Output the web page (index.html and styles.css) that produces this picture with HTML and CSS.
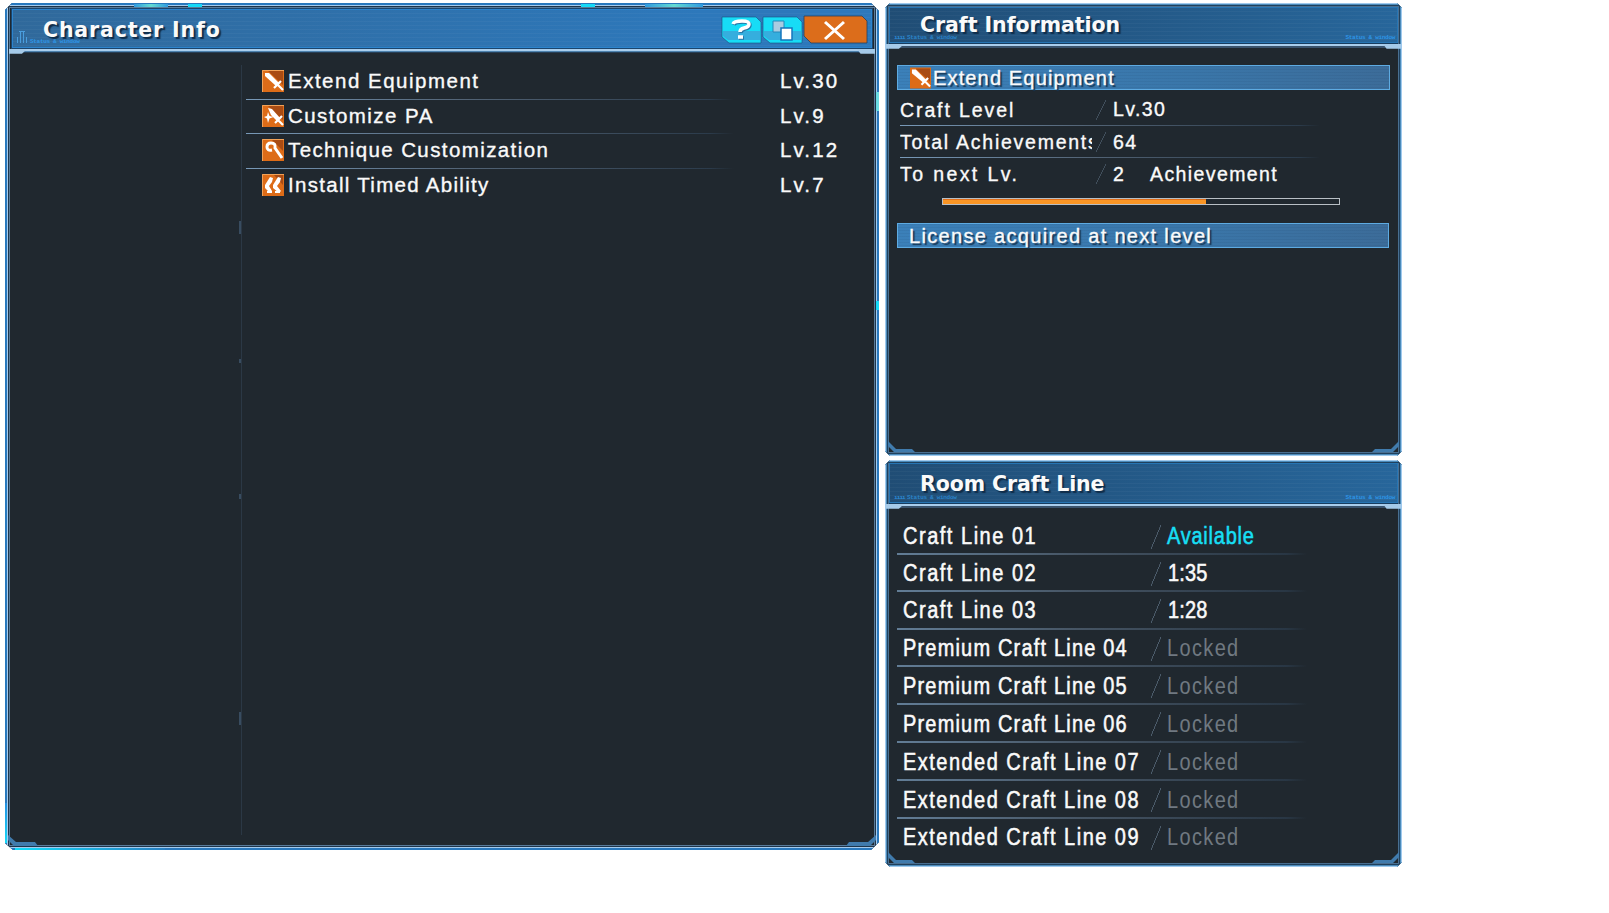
FILE: index.html
```html
<!DOCTYPE html>
<html lang="en">
<head>
<meta charset="utf-8">
<title>Character Info</title>
<link rel="stylesheet" href="styles.css">
</head>
<body>
<main class="desk">
  <section class="window window-main">
    <header class="head head-main">
      <svg class="bars" viewBox="0 0 11 12"><path d="M1.500 6v6M4.500 0v12M7.500 0v12M10.500 6v6M3 .5h6"/></svg>
      <span class="tiny">Status &amp; window</span>
      <h1 class="title title-main">Character Info</h1>
      <svg class="buttons" viewBox="0 0 145 26">
        <path class="cyan" d="M0 0h34l5 5v21H7l-7-6z"/><path class="shade" d="M1 14h37v9H6l-5-4z"/>
        <path class="q-shadow" d="M12 8q1-3 9-3 7 0 7 3 0 3-5 4-4 1-4 4M17 21h5"/>
        <path class="q" d="M11 7q1-3 9-3 7 0 7 3 0 3-5 4-4 1-4 4M16 20h5"/>
        <path class="cyan" d="M41 0h34l5 5v21H48l-7-6z"/><path class="shade" d="M42 14h37v9H47l-5-4z"/>
        <path class="pane-back" d="M51 4h11v11H51z"/><path class="pane-front" d="M59 11h11v12H59z"/>
        <path class="orange" d="M82 -1h58l5 5v22H89l-7-7z"/>
        <path class="x" d="M103 5l19 17M122 5l-19 17"/>
      </svg>
    </header>
    <div class="main-body">
      <aside class="side"><i></i><i></i><i></i><i></i></aside>
      <ul class="crafts">
        <li><svg class="icon" viewBox="0 0 22 22"><path class="tile" d="M0 0h22v22H0z"/><path class="dusk" d="M6 1h15v14z"/><path class="edge" d="M.5 22V.5H22"/><path class="fill" d="M3 3h4l10 10-3 3L3 6z"/><path class="ink" d="M12 18l7-7M15 14l6 6"/></svg><span class="name n1">Extend Equipment</span><b>Lv.30</b></li>
        <li><svg class="icon" viewBox="0 0 22 22"><path class="tile" d="M0 0h22v22H0z"/><path class="dusk" d="M6 1h15v14z"/><path class="edge" d="M.5 22V.5H22"/><path class="fill" d="M6 3l4 1 8 9-3 3-6-6zM6 7l1.500 4 4 1-4 1.500L6 18l-1-4.500L2 12l3-1z"/><path class="ink" d="M13 18l7-7M16 15l5 5"/></svg><span class="name n2">Customize PA</span><b>Lv.9</b></li>
        <li><svg class="icon" viewBox="0 0 22 22"><path class="tile" d="M0 0h22v22H0z"/><path class="dusk" d="M10 1h11v11z"/><path class="edge" d="M.5 22V.5H22"/><path class="ink wide" d="M10 11Q5 12 5 8q0-4 4-4 5 0 4 5l7 10"/></svg><span class="name n3">Technique Customization</span><b>Lv.12</b></li>
        <li><svg class="icon" viewBox="0 0 22 22"><path class="tile" d="M0 0h22v22H0z"/><path class="dusk" d="M12 1h9v10z"/><path class="edge" d="M.5 22V.5H22"/><path class="fill" d="M8 3l3 1-1 4-3 4 3 5-2 2-5-5v-3zM16 3l3 1-1 4-3 4 4 5-2 2-6-5v-3z"/><path class="ink" d="M5 18h5M13 18h5"/></svg><span class="name n4">Install Timed Ability</span><b>Lv.7</b></li>
      </ul>
    </div>
    <svg class="corner corner-l" viewBox="0 0 32 14"><path d="M0 0l8 7h19l3 4H6L0 5z"/></svg>
    <svg class="corner corner-r" viewBox="0 0 32 14"><path d="M0 0l8 7h19l3 4H6L0 5z"/></svg>
  </section>
  <div class="column">
    <section class="window window-info">
      <header class="head"><span class="dots">ıııı</span><span class="tiny">Status &amp; window</span><h2 class="title title-info">Craft Information</h2><span class="tiny tiny-end">Status &amp; window</span></header>
      <div class="info-body">
        <div class="banner banner-craft"><svg class="icon" viewBox="0 0 22 22"><path class="tile" d="M0 0h22v22H0z"/><path class="dusk" d="M6 1h15v14z"/><path class="fill" d="M2 2h4l11 11-3 3L2 6z"/><path class="ink" d="M12 18l7-7M15 14l6 6"/></svg><span class="banner-name">Extend Equipment</span></div>
        <dl class="stats">
          <div><dt class="loose">Craft Level</dt><i class="slash"></i><dd>Lv.30</dd></div>
          <div><dt>Total Achievements</dt><i class="slash"></i><dd>64</dd></div>
          <div><dt class="looser">To next Lv.</dt><i class="slash"></i><dd class="count">2</dd><dd class="unit">Achievement</dd></div>
        </dl>
        <div class="meter"><div class="meter-fill" style="width:66.4%"></div></div>
        <div class="banner banner-license">License acquired at next level</div>
      </div>
      <svg class="corner corner-l" viewBox="0 0 32 14"><path d="M0 0l8 8h16l3 3H6L0 5z"/></svg>
      <svg class="corner corner-r" viewBox="0 0 32 14"><path d="M0 0l8 8h16l3 3H6L0 5z"/></svg>
    </section>
    <section class="window window-room">
      <header class="head"><span class="dots">ıııı</span><span class="tiny">Status &amp; window</span><h2 class="title title-room">Room Craft Line</h2><span class="tiny tiny-end">Status &amp; window</span></header>
      <ol class="lines">
        <li><span class="craft"><em>Craft Line 01</em></span><i class="slash"></i><span class="available"><em>Available</em></span></li>
        <li><span class="craft"><em>Craft Line 02</em></span><i class="slash"></i><span class="time"><em>1:35</em></span></li>
        <li><span class="craft"><em>Craft Line 03</em></span><i class="slash"></i><span class="time"><em>1:28</em></span></li>
        <li><span class="premium"><em>Premium Craft Line 04</em></span><i class="slash"></i><span class="locked"><em>Locked</em></span></li>
        <li><span class="premium"><em>Premium Craft Line 05</em></span><i class="slash"></i><span class="locked"><em>Locked</em></span></li>
        <li><span class="premium"><em>Premium Craft Line 06</em></span><i class="slash"></i><span class="locked"><em>Locked</em></span></li>
        <li><span class="extended"><em>Extended Craft Line 07</em></span><i class="slash"></i><span class="locked"><em>Locked</em></span></li>
        <li><span class="extended"><em>Extended Craft Line 08</em></span><i class="slash"></i><span class="locked"><em>Locked</em></span></li>
        <li><span class="extended"><em>Extended Craft Line 09</em></span><i class="slash"></i><span class="locked"><em>Locked</em></span></li>
      </ol>
      <svg class="corner corner-l" viewBox="0 0 32 14"><path d="M0 0l8 8h16l3 3H6L0 5z"/></svg>
      <svg class="corner corner-r" viewBox="0 0 32 14"><path d="M0 0l8 8h16l3 3H6L0 5z"/></svg>
    </section>
  </div>
</main>
</body>
</html>
```
FILE: styles.css
```css
* { box-sizing: border-box; }
body, h1, h2, ul, ol, dl, dd { margin: 0; padding: 0; }
body { background: #fff; color: #fafafa; font-family: "Liberation Sans", Arial, sans-serif; overflow: hidden; }
ul, ol { list-style: none; }
em, i { font-style: normal; }
.desk { display: flex; gap: 6px; padding: 3px 0 0 5px; align-items: flex-start; }
.column { display: flex; flex-direction: column; gap: 5px; }
.window { position: relative; background: #20282f; overflow: hidden; }
.window-main {
  width: 874px; height: 847px; padding: 6px 5px 7px;
  clip-path: polygon(7px 0, 866px 0, 874px 8px, 874px 839px, 866px 847px, 8px 847px, 0 840px, 0 7px);
  box-shadow: inset 0 0 0 2px #2878bd, inset 0 0 0 3px #a6cbed, inset 0 0 0 4px #1e354b, inset 0 0 0 5px #587b9b;
}
.window-main::before {
  content: ""; position: absolute; inset: 0; pointer-events: none;
  background:
    linear-gradient(#15d9f7 0 0) 183px 1px / 14px 3px,
    linear-gradient(90deg, #2f9adf, #65dbd2, #2f9adf) 129px 1px / 34px 3px,
    linear-gradient(#15d9f7 0 0) 576px 1px / 14px 3px,
    linear-gradient(90deg, #2f9adf, #65dbd2, #2f9adf) 640px 1px / 58px 3px,
    linear-gradient(#6adce2 0 0) 871px 89px / 3px 19px,
    linear-gradient(#15d9f7 0 0) 871px 298px / 3px 9px,
    linear-gradient(90deg, #12dbfa, #277fc2) 10px 845px / 150px 2px,
    linear-gradient(#238fe1, #15d9f7) 0 800px / 2px 40px;
  background-repeat: no-repeat;
}
.window-info, .window-room { width: 517px; box-shadow: inset 0 0 0 1px #9fc9ed, inset 0 0 0 2px #4b8ab9, inset 0 0 0 3px #1f405d, inset 0 0 0 4px #496f91; }
.window-info { height: 453px; padding: 4px 4px; clip-path: polygon(5px 0, 512px 0, 517px 5px, 517px 448px, 512px 453px, 5px 453px, 0 448px, 0 5px); }
.window-room { height: 407px; margin-top: -1px; padding: 3px 4px; clip-path: polygon(5px 0, 512px 0, 517px 5px, 517px 402px, 512px 407px, 5px 407px, 0 402px, 0 5px); }
.head {
  position: relative; display: flex; align-items: center; height: 36px; padding-left: 31px;
  background: repeating-linear-gradient(#ffffff08 0 1px, transparent 1px 4px), linear-gradient(90deg, #204d75, #27669b);
  box-shadow: inset 0 0 0 1px #2675b4, 0 1px #173d60, 0 3px #a9cdec, 0 5px #39536d;
}
.window-room .head { height: 40px; padding-top: 1px; }
.head::before, .head::after { content: ""; position: absolute; top: 100%; width: 18px; height: 6px; margin-top: 1px; background: #a5cae9; }
.head::before { left: -3px; clip-path: polygon(0 0, 100% 0, 72% 80%, 0 80%); }
.head::after { right: -3px; clip-path: polygon(0 0, 100% 0, 100% 80%, 20% 80%); }
.head-main {
  height: 39px; padding: 2px 5px 0 31px; margin: 0 2px;
  background: repeating-linear-gradient(#ffffff08 0 1px, transparent 1px 4px), linear-gradient(90deg, #30699b, #2d78bb 80%);
  box-shadow: inset 0 0 0 1px #2c84cd, 0 0 0 1px #1b456d, 0 3px #a9cdec, 0 4px #4d82ae, 0 5px #263e56;
}
.title { font: bold 20.5px/20px "DejaVu Sans", sans-serif; text-shadow: 2px 2px 1px #102d4a; white-space: nowrap; }
.title-main { flex: 1; letter-spacing: .85px; }
.title-info { letter-spacing: -.05px; }
.title-room { letter-spacing: -.1px; }
.tiny { position: absolute; left: 18px; bottom: 3px; color: #2e95e6; font: bold 6px/7px "Liberation Mono", monospace; letter-spacing: -.3px; white-space: nowrap; }
.window-info .tiny, .window-room .tiny { bottom: 2px; color: #2b83c8; }
.window-info .tiny-end, .window-room .tiny-end { left: auto; right: 3px; color: #2e95e6; }
.dots { position: absolute; left: 5px; bottom: 2px; color: #2c8ad4; font: bold 6px/7px "Liberation Mono", monospace; letter-spacing: -.9px; }
.bars { position: absolute; left: 4px; bottom: 5px; width: 11px; height: 12px; fill: none; stroke: #4a9ede; }
.buttons { width: 145px; height: 26px; overflow: visible; }
.cyan { fill: #17dcf6; stroke: #1a4e7d; stroke-width: .6; }
.shade { fill: #35aede; }
.orange { fill: #dc6d1b; stroke: #263f5a; stroke-width: .8; }
.q, .q-shadow { fill: none; stroke: #fff; stroke-width: 3.5; }
.q-shadow { stroke: #2677a7; }
.pane-back { fill: #a9cce1; stroke: #2388bb; }
.pane-front { fill: #fff; stroke: #1475bc; stroke-width: 1.5; }
.x { fill: none; stroke: #fff; stroke-width: 3; }
.main-body { display: flex; padding: 17px 0 0 4px; }
.side { display: flex; flex-direction: column; width: 228px; height: 770px; border-right: 1px solid #2b3845; padding-top: 156px; align-items: flex-end; }
.side i { flex: none; width: 2px; height: 13px; background: #384c60; margin-bottom: 125px; }
.side i:nth-child(2) { height: 4px; margin-bottom: 131px; }
.side i:nth-child(3) { height: 5px; margin-bottom: 213px; }
.side i:last-child { margin-bottom: 0; }
.crafts { flex: 1; padding: 0 30px 0 4px; }
.crafts li { position: relative; display: flex; align-items: center; height: 34.6px; padding: 0 0 2px 16px; }
.crafts li:not(:last-child)::after, .stats div:not(:last-child)::after, .lines li:not(:last-child)::after { content: ""; position: absolute; left: 0; bottom: 0; width: 488px; height: 1px; background: linear-gradient(90deg, #7899b8, #526375 45%, #2b3b4b 95%, transparent); }
.icon { display: block; width: 22px; height: 22px; flex: none; }
.tile { fill: #dd6c18; }
.dusk { fill: #a94c14; }
.edge { fill: none; stroke: #f1a258; }
.fill { fill: #fff; }
.ink { fill: none; stroke: #fff; stroke-width: 2.2; }
.wide { stroke-width: 3; }
.crafts li, .stats, .banner { -webkit-text-stroke: .35px currentColor; white-space: nowrap; }
.name { font-size: 20.5px; padding-left: 4px; flex: 1; }
.n1 { letter-spacing: 1.5px; }
.n2 { letter-spacing: 1.45px; }
.n3 { letter-spacing: 1.4px; }
.n4 { letter-spacing: 1.3px; }
.crafts b { width: 64px; font-size: 20.5px; font-weight: normal; letter-spacing: 2.1px; }
.info-body { padding: 22px 8px 0; }
.banner { height: 25px; border: 1px solid #5eabe2; background: repeating-linear-gradient(#102c4c12 0 1px, transparent 1px 3px), linear-gradient(90deg, #3b80b9, #3a76a9 60%, #3c6c99); text-shadow: 2px 2px 1px #153653; font-size: 20px; line-height: 24px; }
.banner-craft { display: flex; align-items: center; width: 493px; padding-left: 12px; }
.banner-craft .icon { width: 21px; }
.banner-name { padding-left: 2px; letter-spacing: 1.15px; line-height: 22px; }
.banner-license { width: 492px; padding-left: 11px; letter-spacing: 1.32px; margin-top: 18px; }
.stats { padding-left: 3px; font-size: 19.5px; }
.stats div { position: relative; display: flex; align-items: center; height: 32.2px; padding-top: 7px; }
.stats div:not(:last-child)::after { width: 420px; bottom: -4px; }
.stats div:nth-child(2), .stats div:nth-child(3) { padding-top: 8px; }
.stats dt { width: 192px; overflow: hidden; letter-spacing: 1.75px; line-height: 24px; }
.stats .loose { letter-spacing: 1.9px; }
.stats .looser { letter-spacing: 2.4px; }
.slash { flex: none; width: 10px; height: 20px; background: linear-gradient(to bottom right, transparent 47%, #4c5c6b 48% 52%, transparent 53%); }
.stats .slash { margin: 0 7px 0 4px; opacity: .75; }
.stats dd { letter-spacing: 1.4px; }
.stats .count { width: 37px; }
.meter { width: 398px; height: 7px; margin: 11.4px 0 0 45px; border: 1px solid #b8bfc5; }
.meter-fill { height: 5px; background: #fa9625; border-top: 1px solid #e26f19; }
.lines { padding: 14.6px 8px 0; font-size: 23.5px; white-space: nowrap; }
.lines li { position: relative; display: flex; align-items: center; height: 37.9px; padding-left: 6px; }
.lines li:nth-child(2) { height: 36.2px; }
.lines li:not(:last-child)::after { width: 410px; height: 2px; opacity: .75; }
.lines li > span { -webkit-text-stroke: .55px currentColor; }
.lines em { display: inline-block; transform: scaleX(.85); transform-origin: left; }
.lines li > span:first-child { width: 248px; }
.lines .slash { height: 24px; margin-right: 6px; }
.craft { letter-spacing: 1.8px; }
.premium { letter-spacing: 1.4px; }
.extended { letter-spacing: 1.75px; }
.available { color: #17dff4; letter-spacing: .9px; }
.time { letter-spacing: .2px; padding-left: 1px; }
.lines .locked { color: #707981; letter-spacing: 1.6px; -webkit-text-stroke: 0; }
.corner { position: absolute; bottom: 1px; width: 32px; height: 14px; fill: #407bad; }
.corner-l { left: 3px; }
.corner-r { right: 3px; transform: scaleX(-1); }
```
